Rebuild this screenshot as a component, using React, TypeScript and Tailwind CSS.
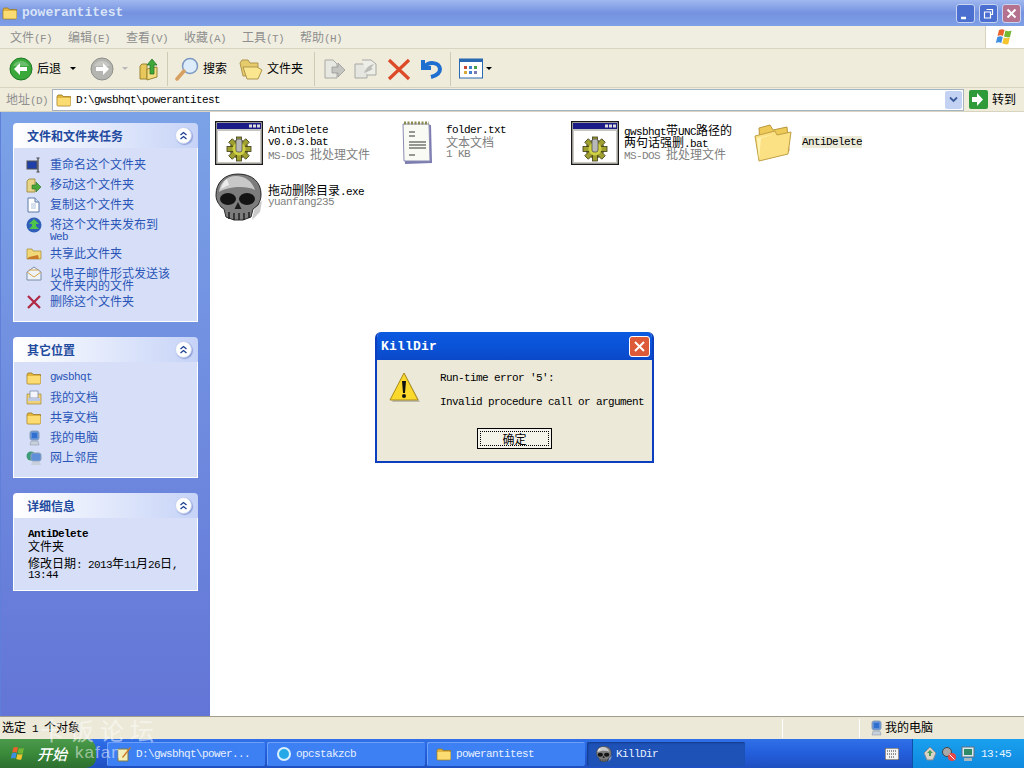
import type { ReactNode } from "react";

/** Latin runs are set in a squeezed mono so they hold the 6px cell of the old bitmap font. */
function T({ children, bold = false }: { children: string; bold?: boolean }) {
	const parts = children.split(/([\x00-\x7f]+)/).filter(Boolean);
	return (
		<>
			{parts.map((part, i) =>
				/^[\x00-\x7f]+$/.test(part) ? (
					<span
						key={i}
						className={`whitespace-pre font-['Liberation_Mono'] text-[11px] tracking-[-0.6px] ${bold ? "font-bold" : ""}`}
					>
						{part}
					</span>
				) : (
					<span key={i} className="font-['Noto_Sans_CJK_SC'] text-[12px]">
						{part}
					</span>
				),
			)}
		</>
	);
}

function FolderIcon({ size = 16 }: { size?: number }) {
	return (
		<svg width={size} height={size} viewBox="0 0 16 16" className="shrink-0">
			<path d="M1 4.500 2 3h4l1 1.500h7.500V13a1 1 0 0 1-1 1H2a1 1 0 0 1-1-1z" fill="#e2b53f" stroke="#9a7a24" strokeWidth="0.800" />
			<path d="M1.500 6h13v7.500h-13z" fill="#fbdc72" />
		</svg>
	);
}

function BigFolder() {
	return (
		<svg width="40" height="40" viewBox="0 0 40 40">
			<path d="M6 5 17 2l3 5 14-3 2 24-28 8z" fill="#eecb58" stroke="#b8963a" />
			<path d="M2 13 22 8l2 4 14-3-3 22L6 38z" fill="#fbe184" stroke="#c09f42" />
			<path d="M6 36 4 15l18-4-14 4z" fill="#fff3b4" />
		</svg>
	);
}

function BatIcon() {
	return (
		<svg width="48" height="44" viewBox="0 0 48 44">
			<rect x="0.500" y="0.500" width="47" height="43" fill="#c8c6c0" stroke="#1a1a1a" strokeWidth="1.500" />
			<rect x="2" y="2" width="44" height="6" fill="#1c1c86" />
			<rect x="34" y="3.500" width="3" height="3" fill="#ddd" />
			<rect x="38" y="3.500" width="3" height="3" fill="#ddd" />
			<rect x="42" y="3.500" width="3" height="3" fill="#ddd" />
			<rect x="3" y="10" width="42" height="31" fill="#fff" />
			<g transform="translate(24 28)">
				<g fill="#a0a030" stroke="#3c3c18" strokeWidth="0.800">
					<circle r="9" />
					<rect x="-2.500" y="-12" width="5" height="24" />
					<rect x="-12" y="-2.500" width="24" height="5" />
					<rect x="-2.500" y="-12" width="5" height="24" transform="rotate(45)" />
					<rect x="-2.500" y="-12" width="5" height="24" transform="rotate(-45)" />
				</g>
				<circle r="6.500" fill="#d0d044" />
				<rect x="-3" y="-10" width="6" height="13" rx="2" fill="#b8b8b8" stroke="#444" strokeWidth="0.700" />
			</g>
		</svg>
	);
}

function NoteIcon() {
	return (
		<svg width="32" height="44" viewBox="0 0 32 44">
			<path d="M3 4h27l1 38-27 1z" fill="#7c7cb0" />
			<path d="M2 3h26l1 37H3z" fill="#fafaf4" stroke="#8b8bb6" />
			<path d="M3 2h25" stroke="#8a8a50" strokeWidth="3" strokeDasharray="2 1.500" />
			<path d="M8 11h6M8 15h6M8 21h17M8 24h17M8 27h17M8 34h6" stroke="#333" strokeWidth="1" />
		</svg>
	);
}

function Skull({ size = 48 }: { size?: number }) {
	return (
		<svg width={size} height={size} viewBox="0 0 48 48">
			<path d="M40 33l7-5-2 11-8 8z" fill="#b4b4b4" opacity="0.700" />
			<path d="M23 1C9 1 1 10 1 22c0 6 3 9 5 12l3 2 2 8 8 3h9l8-3 2-8 5-4c2-4 3-6 3-11C46 9 37 1 23 1z" fill="#7c7c7c" stroke="#2a2a2a" strokeWidth="1" />
			<path d="M21 3C11 3 5 10 4 19c9-5 26-7 36-2-3-9-10-14-19-14z" fill="#c8c8c8" />
			<path d="M12 6c-3 2-5 6-6 10 3-2 5-3 8-4z" fill="#ececec" />
			<ellipse cx="13" cy="26" rx="8" ry="6" fill="#141414" />
			<ellipse cx="32" cy="26" rx="8" ry="6" fill="#141414" />
			<path d="M23 29l-3.500 7h7z" fill="#1c1c1c" />
			<path d="M14 39v7M19 40v7M24 40v7M29 40v7M34 39v6" stroke="#1c1c1c" strokeWidth="1.400" />
		</svg>
	);
}

function Chevrons() {
	return (
		<span className="flex h-[17px] w-[17px] items-center justify-center rounded-full border border-[#c6d0ee] bg-white shadow-[1px_1px_1px_#8ea0d8]">
			<svg width="9" height="9" viewBox="0 0 9 9" fill="none" stroke="#1c3f94" strokeWidth="1.300">
				<path d="M1.500 4 4.500 1.500 7.500 4M1.500 8 4.500 5.500 7.500 8" />
			</svg>
		</span>
	);
}

function Panel({ title, bodyClass, children }: { title: string; bodyClass: string; children: ReactNode }) {
	return (
		<div className="w-[185px]">
			<div className="flex h-[25px] items-center justify-between rounded-t-[4px] bg-gradient-to-r from-white to-[#c6d3f7] pl-[14px] pr-[6px]">
				<span className="font-['Noto_Sans_CJK_SC'] text-[12px] font-bold text-[#1f4a9e]">{title}</span>
				<Chevrons />
			</div>
			<div className={`border border-t-0 border-white bg-[#d6dff7] ${bodyClass}`}>{children}</div>
		</div>
	);
}

function Line({ children }: { children: ReactNode }) {
	return <div className="h-[12px] whitespace-nowrap">{children}</div>;
}

function LinkRow({ icon, h = "h-5", children }: { icon: ReactNode; h?: string; children: ReactNode }) {
	return (
		<div className={`flex ${h} items-start pl-[12px]`}>
			<span className="mr-[8px] mt-[2px] flex h-4 w-4 shrink-0 items-center justify-center">{icon}</span>
			<div className="pt-[3px] text-[#2a55b8]">{children}</div>
		</div>
	);
}

function Computer({ size = 16 }: { size?: number }) {
	return (
		<svg width={size} height={size} viewBox="0 0 16 16">
			<rect x="4" y="1" width="9" height="9" rx="2" fill="#5f8fd8" stroke="#8aa0b8" />
			<rect x="6" y="3" width="5" height="5" fill="#2f6fd0" />
			<path d="M5 11h7l1 4H4z" fill="#c8d0dc" stroke="#8090a0" strokeWidth="0.500" />
		</svg>
	);
}

function TaskPanel() {
	return (
		<Panel title="文件和文件夹任务" bodyClass="h-[174px] pt-[7px]">
			<LinkRow
				icon={
					<svg width="16" height="16" viewBox="0 0 16 16">
						<rect x="1" y="4" width="10" height="8" fill="#1f3fa8" stroke="#555" />
						<path d="M12 1v14M10.500 1h3M10.500 15h3" stroke="#444" strokeWidth="1.200" />
					</svg>
				}
			>
				<Line>
					<T>重命名这个文件夹</T>
				</Line>
			</LinkRow>
			<LinkRow
				icon={
					<svg width="16" height="16" viewBox="0 0 16 16">
						<path d="M1 4l2-2h6v13H1z" fill="#e8d488" stroke="#a59248" />
						<path d="M6 8h4V5l5 5-5 5v-3H6z" fill="#49a83a" stroke="#2b6f22" strokeWidth="0.600" />
					</svg>
				}
			>
				<Line>
					<T>移动这个文件夹</T>
				</Line>
			</LinkRow>
			<LinkRow
				icon={
					<svg width="16" height="16" viewBox="0 0 16 16">
						<path d="M2 1h7l4 4v10H2z" fill="#fff" stroke="#5d7aa8" />
						<path d="M9 1v4h4" fill="#cfe0f7" stroke="#5d7aa8" />
						<path d="M5 7h5M5 9h5M5 11h5" stroke="#9ab0d0" strokeWidth="0.800" />
					</svg>
				}
			>
				<Line>
					<T>复制这个文件夹</T>
				</Line>
			</LinkRow>
			<LinkRow
				h="h-[29px]"
				icon={
					<svg width="16" height="16" viewBox="0 0 16 16">
						<circle cx="8" cy="8" r="7.500" fill="#2f5fb8" />
						<path d="M8 2l5 5h-3v2l3 3H3l3-3V7H3z" fill="#4fc44a" />
					</svg>
				}
			>
				<Line>
					<T>将这个文件夹发布到</T>
				</Line>
				<div className="mt-px">
					<Line>
						<T>Web</T>
					</Line>
				</div>
			</LinkRow>
			<LinkRow
				icon={
					<svg width="16" height="16" viewBox="0 0 16 16">
						<path d="M1 3h5l1 2h8v8H1z" fill="#f0d878" stroke="#a88a30" strokeWidth="0.700" />
						<path d="M3 11c3-1 6-1 9-2l1 4H1z" fill="#c87a28" />
					</svg>
				}
			>
				<Line>
					<T>共享此文件夹</T>
				</Line>
			</LinkRow>
			<LinkRow
				h="h-[28px]"
				icon={
					<svg width="16" height="16" viewBox="0 0 16 16">
						<path d="M8 1l7 5v8H1V6z" fill="#eef2fa" stroke="#7a8ca8" />
						<path d="M1 6l7 5 7-5M3 4h10" fill="none" stroke="#d8a848" />
					</svg>
				}
			>
				<Line>
					<T>以电子邮件形式发送该</T>
				</Line>
				<Line>
					<T>文件夹内的文件</T>
				</Line>
			</LinkRow>
			<LinkRow
				icon={
					<svg width="16" height="16" viewBox="0 0 16 16" fill="none" stroke="#b02a48" strokeWidth="2.300">
						<path d="M2 2l12 12M14 2 2 14" />
					</svg>
				}
			>
				<Line>
					<T>删除这个文件夹</T>
				</Line>
			</LinkRow>
		</Panel>
	);
}

function PlacesPanel() {
	return (
		<Panel title="其它位置" bodyClass="h-[116px] pt-[6px]">
			<LinkRow icon={<FolderIcon />}>
				<Line>
					<T>gwsbhqt</T>
				</Line>
			</LinkRow>
			<LinkRow
				icon={
					<svg width="16" height="16" viewBox="0 0 16 16">
						<path d="M1 4h14v10H1z" fill="#efd27a" stroke="#a88a30" strokeWidth="0.700" />
						<path d="M4 1h8v7H4z" fill="#f4f6fc" stroke="#6a7fa8" strokeWidth="0.700" />
						<path d="M2 8h12v3H2z" fill="#bcc8e4" />
					</svg>
				}
			>
				<Line>
					<T>我的文档</T>
				</Line>
			</LinkRow>
			<LinkRow icon={<FolderIcon />}>
				<Line>
					<T>共享文档</T>
				</Line>
			</LinkRow>
			<LinkRow icon={<Computer />}>
				<Line>
					<T>我的电脑</T>
				</Line>
			</LinkRow>
			<LinkRow
				icon={
					<svg width="16" height="16" viewBox="0 0 16 16">
						<circle cx="5" cy="6" r="4.500" fill="#3f9a7a" />
						<rect x="5" y="3" width="10" height="8" rx="2" fill="#5f8fd8" stroke="#8aa0b8" />
						<path d="M6 12h8l1 3H5z" fill="#c8d0dc" />
					</svg>
				}
			>
				<Line>
					<T>网上邻居</T>
				</Line>
			</LinkRow>
		</Panel>
	);
}

function DetailsPanel() {
	return (
		<Panel title="详细信息" bodyClass="h-[73px] pl-[14px] pt-[10px] text-black">
			<Line>
				<T bold>AntiDelete</T>
			</Line>
			<Line>
				<T>文件夹</T>
			</Line>
			<div className="mt-[5px]">
				<Line>
					<T>修改日期: 2013年11月26日,</T>
				</Line>
			</div>
			<Line>
				<T>13:44</T>
			</Line>
		</Panel>
	);
}

function Tile({ icon, lines, sub, selected = false }: { icon: ReactNode; lines: string[]; sub: string[]; selected?: boolean }) {
	return (
		<div className="flex h-[54px] w-[178px] items-start">
			<div className="flex h-[48px] w-[48px] shrink-0 items-center justify-center">{icon}</div>
			<div className="ml-[5px] flex h-[46px] flex-col justify-center">
				{lines.map((line) => (
					<div key={line} className={`h-[12px] whitespace-nowrap text-black ${selected ? "w-fit bg-[#ecead9]" : ""}`}>
						<T>{line}</T>
					</div>
				))}
				{sub.map((line) => (
					<div key={line} className="h-[12px] whitespace-nowrap text-[#808080]">
						<T>{line}</T>
					</div>
				))}
			</div>
		</div>
	);
}

function TitleButton({ kind }: { kind: "min" | "restore" | "close" }) {
	const bg = kind === "close" ? "bg-[#b4728e]" : "bg-[#4a6fd0]";
	return (
		<span className={`flex h-[19px] w-[19px] items-center justify-center rounded-[3px] border border-[#c8d4f0] ${bg}`}>
			<svg width="13" height="13" viewBox="0 0 13 13" fill="none" stroke="#fff">
				{kind === "min" && <path d="M2 11h5" strokeWidth="2.500" />}
				{kind === "restore" && <path d="M4.500 2.500h6v5h-2M2.500 5h6v6h-6z" strokeWidth="1.200" />}
				{kind === "close" && <path d="M2.500 2.500l8 8M10.500 2.500l-8 8" strokeWidth="2" />}
			</svg>
		</span>
	);
}

function Flag({ size = 20 }: { size?: number }) {
	return (
		<svg width={size} height={size} viewBox="0 0 20 20">
			<path d="M4 3c2-1 4-1 5.500 0L8 9C6.500 8 4.500 8 2.500 9z" fill="#e8622c" />
			<path d="M10.500 3.500c2 1 4 1 6 0L15 10c-2 1-4 0-6-.500z" fill="#74b832" />
			<path d="M2.300 10c2-1 4-1 5.500 0L6.300 16c-1.500-1-3.500-1-5.500 0z" fill="#3f8fe0" />
			<path d="M8.800 10.500c2 1 4 1 6 0l-1.500 6.500c-2 1-4 0-6-.500z" fill="#f4c52c" />
		</svg>
	);
}

function MenuBar() {
	const items = ["文件(F)", "编辑(E)", "查看(V)", "收藏(A)", "工具(T)", "帮助(H)"];
	return (
		<div className="flex h-[23px] items-stretch justify-between border-b border-[#d8d4c0] bg-[#f0eee1]">
			<div className="flex items-center pl-[10px] pt-[2px] text-[#8f8f8f]">
				{items.map((item) => (
					<span key={item} className="w-[58px] whitespace-nowrap">
						<T>{item}</T>
					</span>
				))}
			</div>
			<div className="flex w-[39px] items-center justify-center border-l border-[#d8d4c0] bg-white">
				<Flag />
			</div>
		</div>
	);
}

function Separator() {
	return <span className="block h-[34px] w-px bg-[#cfcbb4]" />;
}

function Arrow({ gray = false }: { gray?: boolean }) {
	return <span className={`block h-0 w-0 border-x-[3px] border-t-[3px] border-x-transparent ${gray ? "border-t-[#b8b8b8]" : "border-t-black"}`} />;
}

function RoundArrow({ gray = false }: { gray?: boolean }) {
	return (
		<svg width="24" height="24" viewBox="0 0 24 24" className="block">
			<circle cx="12" cy="12" r="11" fill={gray ? "#b4b4b0" : "#3aa83a"} stroke={gray ? "#90908c" : "#1e7a28"} />
			<path d="M4 9a9 9 0 0 1 16 0z" fill="#fff" opacity="0.250" />
			{gray ? (
				<path d="M13 6l6 6-6 6v-4H6v-4h7z" fill="#fff" />
			) : (
				<path d="M11 6l-6 6 6 6v-4h7v-4h-7z" fill="#fff" />
			)}
		</svg>
	);
}

function Toolbar() {
	return (
		<div className="flex h-[39px] items-center border-b border-[#d8d4c0] bg-[#efecdc] pl-[9px] pt-px text-black">
			<RoundArrow />
			<span className="ml-[4px] w-[33px]">
				<T>后退</T>
			</span>
			<Arrow />
			<span className="ml-[14px]">
				<RoundArrow gray />
			</span>
			<span className="ml-[8px]">
				<Arrow gray />
			</span>
			<svg width="20" height="24" viewBox="0 0 20 24" className="ml-[11px]">
				<path d="M1 9l2-2h5v15H1z" fill="#e8c85c" stroke="#9a8430" />
				<path d="M8 23l10-3V10L8 12z" fill="#f4dc80" stroke="#9a8430" />
				<path d="M11 17V8H8l5-6 5 6h-3v9z" fill="#3ea83a" stroke="#1f6f22" strokeWidth="0.700" />
			</svg>
			<span className="ml-[8px]">
				<Separator />
			</span>
			<svg width="24" height="24" viewBox="0 0 24 24" className="ml-[7px]">
				<circle cx="15" cy="9" r="7.500" fill="#dcecfa" stroke="#7a98c0" strokeWidth="1.500" />
				<path d="M9 14 2 22" stroke="#d8a060" strokeWidth="3.500" strokeLinecap="round" />
			</svg>
			<span className="ml-[4px] w-[36px]">
				<T>搜索</T>
			</span>
			<svg width="24" height="22" viewBox="0 0 24 22">
				<path d="M1 5l2-3h6l2 3h8v13H4z" fill="#e6cb6c" stroke="#b0954a" />
				<path d="M8 21l-4-12h14l5 3-4 9z" fill="#fbe690" stroke="#b0954a" />
			</svg>
			<span className="ml-[4px] w-[47px] whitespace-nowrap">
				<T>文件夹</T>
			</span>
			<Separator />
			<svg width="24" height="24" viewBox="0 0 24 24" className="ml-[7px]">
				<path d="M3 3h8l4 4v14H3z" fill="#e8e8e2" stroke="#a8a8a4" />
				<path d="M10 10h6V6l7 7-7 7v-4h-6z" fill="#c4c4c0" stroke="#909090" strokeWidth="0.700" />
			</svg>
			<svg width="24" height="24" viewBox="0 0 24 24" className="ml-[8px]">
				<path d="M1 7h9l3 3v11H1z" fill="#e6e6e0" stroke="#a8a8a4" />
				<path d="M8 3h9l5 4v11H13" fill="#eeeee8" stroke="#a8a8a4" />
				<path d="M10 16c2-5 5-8 10-9l-3 4 2 1-6 3z" fill="#bcbcb8" />
			</svg>
			<svg width="24" height="24" viewBox="0 0 24 24" fill="none" stroke="#dc4a28" strokeWidth="3.200" className="ml-[9px]">
				<path d="M2 3l20 19M22 3 2 22" />
			</svg>
			<svg width="24" height="24" viewBox="0 0 24 24" fill="none" stroke="#1f6fd0" strokeWidth="4" className="ml-[8px]">
				<path d="M4 3v8h8" />
				<path d="M5 10c5-6 15-5 16 2 0 5-5 7-9 8" />
			</svg>
			<span className="ml-[7px]">
				<Separator />
			</span>
			<svg width="24" height="22" viewBox="0 0 24 22" className="ml-[8px]">
				<rect x="0.500" y="1" width="23" height="19" fill="#fff" stroke="#2a68b0" />
				<rect x="1" y="1" width="22" height="3" fill="#2a68b0" />
				<path d="M5 8h3v3H5z" fill="#c84838" />
				<path d="M10 8h3v3h-3z" fill="#3f7ed0" />
				<path d="M15 8h3v3h-3z" fill="#48a048" />
				<path d="M5 13h3v3H5z" fill="#d8a838" />
				<path d="M10 13h3v3h-3z" fill="#3f7ed0" />
				<path d="M15 13h3v3h-3z" fill="#7a7ab8" />
			</svg>
			<span className="ml-[3px]">
				<Arrow />
			</span>
		</div>
	);
}

function AddressBar() {
	return (
		<div className="flex h-[24px] items-center border-b border-[#d8d4c0] bg-[#efecdc]">
			<span className="w-[52px] pl-[6px] text-[#8f8f8f]">
				<T>地址(D)</T>
			</span>
			<div className="flex h-[22px] w-[912px] items-center border border-[#a5b4c4] bg-white pl-[3px]">
				<FolderIcon />
				<span className="ml-[4px] text-black">
					<T>{"D:\\gwsbhqt\\powerantitest"}</T>
				</span>
				<span className="ml-auto mr-px flex h-[18px] w-[17px] items-center justify-center rounded-[2px] bg-[#c3d1f3]">
					<svg width="9" height="7" viewBox="0 0 9 7" fill="none" stroke="#3a5a9a" strokeWidth="1.800">
						<path d="M1 1.500 4.500 5 8 1.500" />
					</svg>
				</span>
			</div>
			<svg width="19" height="19" viewBox="0 0 19 19" className="ml-[5px]">
				<rect width="19" height="19" rx="2" fill="#2f9a3a" />
				<path d="M8 3l6 6.500L8 16v-4H3V7h5z" fill="#fff" />
			</svg>
			<span className="ml-[4px] text-black">
				<T>转到</T>
			</span>
		</div>
	);
}

function Sidebar() {
	return (
		<aside className="flex h-full w-[209px] shrink-0 flex-col gap-[15px] bg-gradient-to-b from-[#7ba2e7] to-[#6375d6] pl-[12px] pt-[11px]">
			<TaskPanel />
			<PlacesPanel />
			<DetailsPanel />
		</aside>
	);
}

function FileArea() {
	return (
		<main className="h-full flex-1 bg-white pl-[5px] pt-[7px]">
			<div className="grid w-[712px] grid-cols-4">
				<Tile icon={<BatIcon />} lines={["AntiDelete", "v0.0.3.bat"]} sub={["MS-DOS 批处理文件"]} />
				<Tile icon={<NoteIcon />} lines={["folder.txt"]} sub={["文本文档", "1 KB"]} />
				<Tile icon={<BatIcon />} lines={["gwsbhqt带UNC路径的", "两句话强删.bat"]} sub={["MS-DOS 批处理文件"]} />
				<Tile icon={<BigFolder />} lines={["AntiDelete"]} sub={[]} selected />
				<Tile icon={<Skull />} lines={["拖动删除目录.exe"]} sub={["yuanfang235"]} />
			</div>
		</main>
	);
}

function StatusBar() {
	return (
		<div className="flex h-[23px] items-center border-t border-[#9f9d90] bg-[#ece9d8] text-black">
			<span className="w-[782px] pl-[2px]">
				<T>选定 1 个对象</T>
			</span>
			<span className="h-[19px] w-[77px] border-l border-white" />
			<span className="flex h-[19px] items-center border-l border-white pl-[8px]">
				<Computer />
				<span className="ml-[1px]">
					<T>我的电脑</T>
				</span>
			</span>
		</div>
	);
}

function TaskButton({ icon, label, active = false }: { icon: ReactNode; label: string; active?: boolean }) {
	return (
		<div
			className={`flex h-[24px] w-[158px] items-center rounded-[2px] pl-[9px] text-[#e8f0ff] ${active ? "bg-[#1e52b7] shadow-[inset_1px_1px_2px_#123a88]" : "bg-[#3c80f3] shadow-[inset_1px_1px_0_#6ea0f8]"}`}
		>
			<span className="flex w-[20px] shrink-0 items-center">{icon}</span>
			<span className="whitespace-nowrap">
				<T>{label}</T>
			</span>
		</div>
	);
}

function Taskbar() {
	return (
		<div className="flex h-[29px] items-center bg-gradient-to-b from-[#2f70e8] via-[#245edb] to-[#1f4fc0]">
			<div className="flex h-[29px] w-[96px] shrink-0 items-center rounded-r-[10px] bg-gradient-to-b from-[#4c9a4c] via-[#3a8a3a] to-[#2d6f30] pl-[10px] text-white">
				<Flag size={17} />
				<span className="ml-[10px] font-['Noto_Sans_CJK_SC'] text-[15px] font-medium italic">开始</span>
			</div>
			<div className="ml-[11px] flex gap-[2px]">
				<TaskButton
					icon={
						<svg width="16" height="16" viewBox="0 0 16 16">
							<path d="M2 3h10v12H2z" fill="#f4eeb8" stroke="#7a7a48" />
							<path d="M6 11 14 1l1 1-8 10z" fill="#c87a28" />
						</svg>
					}
					label={"D:\\gwsbhqt\\power..."}
				/>
				<TaskButton
					icon={
						<svg width="16" height="16" viewBox="0 0 16 16">
							<circle cx="8" cy="8" r="6" fill="#25a8e8" stroke="#d8f0ff" strokeWidth="2" />
						</svg>
					}
					label="opcstakzcb"
				/>
				<TaskButton icon={<FolderIcon />} label="powerantitest" />
				<TaskButton icon={<Skull size={16} />} label="KillDir" active />
			</div>
			<svg width="14" height="12" viewBox="0 0 14 12" className="ml-[140px]">
				<rect width="14" height="12" fill="#f4f4f4" stroke="#333" />
				<path d="M2 3h10M2 6h10M4 9h6" stroke="#333" strokeDasharray="1 1" />
			</svg>
			<div className="ml-auto flex h-[29px] w-[112px] items-center border-l border-[#0f4fa8] bg-gradient-to-b from-[#1aa0ee] to-[#0f8ae0] pl-[10px] text-[#e8f4ff]">
				<svg width="14" height="16" viewBox="0 0 14 16">
					<path d="M7 1l6 6-3 7H4L1 7z" fill="#d8d4c8" stroke="#7a8a9a" />
					<path d="M7 4l3 3H8v3H6V7H4z" fill="#4a9a5a" />
				</svg>
				<svg width="16" height="16" viewBox="0 0 16 16" className="ml-[4px]">
					<circle cx="6" cy="6" r="4.500" fill="#a8a8a8" stroke="#444" />
					<circle cx="11" cy="11" r="4" fill="#e84848" />
					<path d="M8.500 8.500l5 5" stroke="#fff" />
				</svg>
				<svg width="14" height="16" viewBox="0 0 14 16" className="ml-[4px]">
					<rect x="1" y="1" width="12" height="10" fill="#d8e8f0" stroke="#607080" />
					<rect x="3" y="3" width="8" height="6" fill="#2f8a68" />
					<rect x="3" y="12" width="8" height="3" fill="#a8b8c0" />
				</svg>
				<span className="ml-[6px]">
					<T>13:45</T>
				</span>
			</div>
		</div>
	);
}

function ErrorDialog() {
	return (
		<div className="absolute left-[375px] top-[332px] w-[279px] overflow-hidden rounded-t-[6px] border-[2px] border-t-0 border-[#0c3fc0] bg-[#ece9d8]">
			<div className="-mx-[2px] flex h-[28px] items-center justify-between bg-gradient-to-b from-[#0a5ae0] via-[#0a53d8] to-[#0a48c8] pl-[6px] pr-[4px]">
				<span className="pt-[2px] font-['Liberation_Mono'] text-[13px] font-bold tracking-[0.2px] text-white">KillDir</span>
				<span className="flex h-[21px] w-[21px] items-center justify-center rounded-[3px] border border-white bg-[#dd5a38]">
					<svg width="13" height="13" viewBox="0 0 13 13" fill="none" stroke="#fff" strokeWidth="2">
						<path d="M2 2l9 9M11 2l-9 9" />
					</svg>
				</span>
			</div>
			<div className="flex h-[101px] flex-col">
				<div className="flex h-[68px] pl-[12px] pt-[12px]">
					<svg width="32" height="33" viewBox="0 0 32 33" className="shrink-0">
						<path d="M16 2 31 30H3z" fill="#777" opacity="0.400" />
						<path d="M15 1 29 28H1z" fill="#fbd92c" stroke="#a88a18" strokeLinejoin="round" />
						<path d="M13 9h4l-1 12h-2z" fill="#111" />
						<circle cx="15" cy="24" r="2" fill="#111" />
					</svg>
					<div className="ml-[19px] text-black">
						<Line>
							<T>{"Run-time error '5':"}</T>
						</Line>
						<div className="mt-[12px]">
							<Line>
								<T>Invalid procedure call or argument</T>
							</Line>
						</div>
					</div>
				</div>
				<div className="flex justify-center">
					<button className="flex h-[21px] w-[75px] items-center justify-center border border-black bg-[#f4f3ea] p-[2px] text-black">
						<span className="flex h-full w-full items-center justify-center border border-dotted border-black">
							<T>确定</T>
						</span>
					</button>
				</div>
			</div>
		</div>
	);
}

function Watermark() {
	return (
		<div className="pointer-events-none absolute left-[40px] top-[716px] text-white/50">
			<div className="font-['Noto_Sans_CJK_SC'] text-[24px] leading-[28px] tracking-[6px]">卡饭论坛</div>
			<div className="ml-[35px] font-['Liberation_Sans'] text-[17px] leading-[18px] tracking-[1px]">kafan</div>
		</div>
	);
}

export default function App() {
	return (
		<div className="relative flex h-[768px] w-[1024px] flex-col overflow-hidden bg-white font-['Liberation_Mono'] text-[11px] leading-[12px]">
			<div className="flex h-[26px] items-center justify-between bg-gradient-to-b from-[#a0b8f0] via-[#7592e0] to-[#7ea0e6] pl-[2px] pr-[3px]">
				<div className="flex items-center">
					<FolderIcon />
					<span className="ml-[4px] font-['Liberation_Mono'] text-[13px] font-bold text-[#d8e4f8]">powerantitest</span>
				</div>
				<div className="flex gap-[4px]">
					<TitleButton kind="min" />
					<TitleButton kind="restore" />
					<TitleButton kind="close" />
				</div>
			</div>
			<MenuBar />
			<Toolbar />
			<AddressBar />
			<div className="flex h-[604px] border-l border-[#5f7fd8]">
				<Sidebar />
				<FileArea />
			</div>
			<StatusBar />
			<Taskbar />
			<ErrorDialog />
			<Watermark />
		</div>
	);
}
